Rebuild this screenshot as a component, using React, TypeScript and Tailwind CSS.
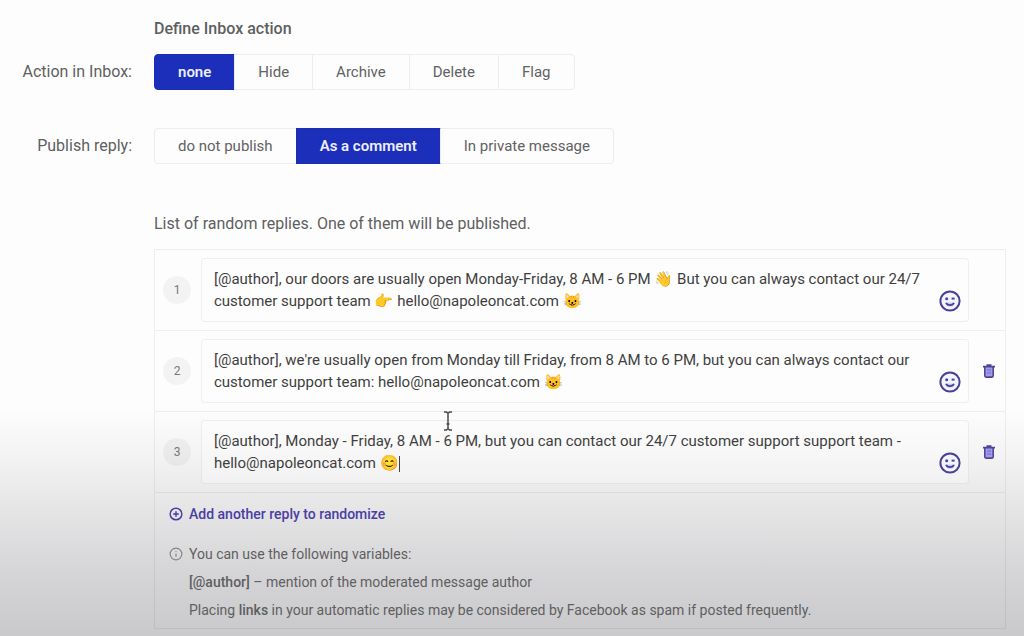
import { useState } from "react"
import { CirclePlus, Info } from "lucide-react"

const inboxActions = ["none", "Hide", "Archive", "Delete", "Flag"]
const publishOptions = ["do not publish", "As a comment", "In private message"]

const initialReplies = [
  "[@author], our doors are usually open Monday-Friday, 8 AM - 6 PM 👋 But you can always contact our 24/7 customer support team 👉 hello@napoleoncat.com 😺",
  "[@author], we're usually open from Monday till Friday, from 8 AM to 6 PM, but you can always contact our customer support team: hello@napoleoncat.com 😺",
  "[@author], Monday - Friday, 8 AM - 6 PM, but you can contact our 24/7 customer support support team - hello@napoleoncat.com 😊",
]

function Segmented({ label, options, value, onChange }: {
  label: string
  options: string[]
  value: string
  onChange: (value: string) => void
}) {
  return (
    <div role="group" aria-label={label} className="flex h-9">
      {options.map((option) => (
        <button
          key={option}
          type="button"
          aria-pressed={option === value}
          onClick={() => onChange(option)}
          className={
            option === value
              ? "-mr-px border border-[#1a2fae] bg-[#1b2fbb] px-[23px] font-semibold text-[#eceefb] first:rounded-l last:rounded-r"
              : "-mr-px border border-[#ededef] px-[23px] text-[#626264] first:rounded-l last:rounded-r"
          }
        >
          {option}
        </button>
      ))}
    </div>
  )
}

function SmileIcon() {
  return (
    <svg viewBox="0 0 22 22" className="size-[22px]" fill="none" stroke="#46429a" strokeWidth="2">
      <circle cx="11" cy="11" r="9.6" fill="#f4f4ff" />
      <circle cx="7.700" cy="8.800" r="1.500" fill="#46429a" stroke="none" />
      <path d="M12.600 8.600h3" strokeWidth="2" />
      <path d="M5.800 12.400h10.400c-.6 2.800-2.600 4.400-5.200 4.400s-4.600-1.600-5.200-4.400z" fill="#cdcdf8" stroke="none" />
      <path d="M7 13c1 1.500 2.300 2.100 4 2.100s3-.6 4-2.100" strokeWidth="1.800" />
    </svg>
  )
}

function TrashIcon() {
  return (
    <svg viewBox="0 0 12 14" className="h-3.5 w-3" fill="none" stroke="#4d4798" strokeWidth="1.600">
      <path d="M1.800 3v8.700a1.400 1.400 0 0 0 1.400 1.400h5.600a1.400 1.400 0 0 0 1.400-1.400V3" fill="#a29bea" />
      <path d="M0 2.600h12M3.500 1.200h5" strokeWidth="1.800" />
      <path d="M4 6h4M4 9h4" strokeWidth="1" stroke="#716bc4" />
    </svg>
  )
}

export default function App() {
  const [action, setAction] = useState("none")
  const [publish, setPublish] = useState("As a comment")
  const [replies, setReplies] = useState(initialReplies)

  return (
    <div className="min-h-screen bg-[linear-gradient(to_bottom,#fdfdfd_64%,#f4f4f4_71%,#e5e5e6_80%,#d5d5d7_90%,#c9c9cb)] pt-[18px] pr-[18px] pb-2 font-['Roboto',sans-serif] text-[15px] leading-[22px] text-[#5f5f61]">
      {/* Inbox action */}
      <div className="grid grid-cols-[132px_1fr] items-center gap-x-[22px]">
        <h2 className="col-start-2 mb-3.5 text-base leading-[22px] font-medium">Define Inbox action</h2>
        <span className="text-right text-base">Action in Inbox:</span>
        <Segmented label="Action in Inbox" options={inboxActions} value={action} onChange={setAction} />
      </div>

      {/* Publish reply */}
      <div className="mt-[38px] grid grid-cols-[132px_1fr] items-center gap-x-[22px]">
        <span className="text-right text-base">Publish reply:</span>
        <Segmented label="Publish reply" options={publishOptions} value={publish} onChange={setPublish} />
      </div>

      {/* Replies */}
      <div className="mt-12 ml-[154px]">
        <p className="mb-[13px] text-base">List of random replies. One of them will be published.</p>
        <div className="border border-black/6">
          {replies.map((reply, index) => (
            <div key={index} className="flex items-center border-b border-black/6 py-2 pl-2">
              <span className="flex size-7 items-center justify-center rounded-full bg-black/4 text-xs text-[#77777a]">
                {index + 1}
              </span>
              <div className="relative ml-2.5 h-16 flex-1">
                <textarea
                  aria-label={`Reply ${index + 1}`}
                  value={reply}
                  onChange={(e) => setReplies(replies.map((r, i) => (i === index ? e.target.value : r)))}
                  className="block size-full resize-none overflow-hidden rounded border border-black/6 bg-white/30 pt-[9px] pr-11 pb-1 pl-3 text-[#3f3f41] outline-none"
                />
                {index === 2 && <span className="absolute top-9 left-[198px] h-4 w-px bg-[#3f3f41]" />}
                <button type="button" aria-label="Insert emoji" className="absolute right-2 bottom-2.5">
                  <SmileIcon />
                </button>
              </div>
              <div className="flex w-9 justify-center pl-1">
                {index > 0 && (
                  <button
                    type="button"
                    aria-label="Delete reply"
                    onClick={() => setReplies(replies.filter((_, i) => i !== index))}
                  >
                    <TrashIcon />
                  </button>
                )}
              </div>
            </div>
          ))}

          <div className="px-3.5 pt-[11px] pb-2 text-sm">
            <button
              type="button"
              onClick={() => setReplies([...replies, ""])}
              className="flex items-center gap-1.5 font-medium text-[#4a3da6]"
            >
              <CirclePlus className="size-3.5" strokeWidth={2.5} />
              Add another reply to randomize
            </button>
            <p className="mt-5 flex items-center gap-1.5">
              <Info className="size-3.5 text-[#858587]" />
              You can use the following variables:
            </p>
            <p className="mt-2 pl-5">
              <b className="font-medium">[@author]</b> – mention of the moderated message author
            </p>
            <p className="mt-2 pl-5">
              Placing <b className="font-medium">links</b> in your automatic replies may be considered by Facebook as
              spam if posted frequently.
            </p>
          </div>
        </div>
      </div>

      {/* Text pointer */}
      <svg viewBox="0 0 10 20" className="absolute top-[411px] left-[443px] h-5 w-2.5" fill="none" stroke="#4a4a4c" strokeWidth="1.500">
        <path d="M1 1h2.500L5 2.500 6.500 1H9M5 2.500v15M1 19h2.500L5 17.500 6.500 19H9M3.500 13h3" />
      </svg>
    </div>
  )
}
